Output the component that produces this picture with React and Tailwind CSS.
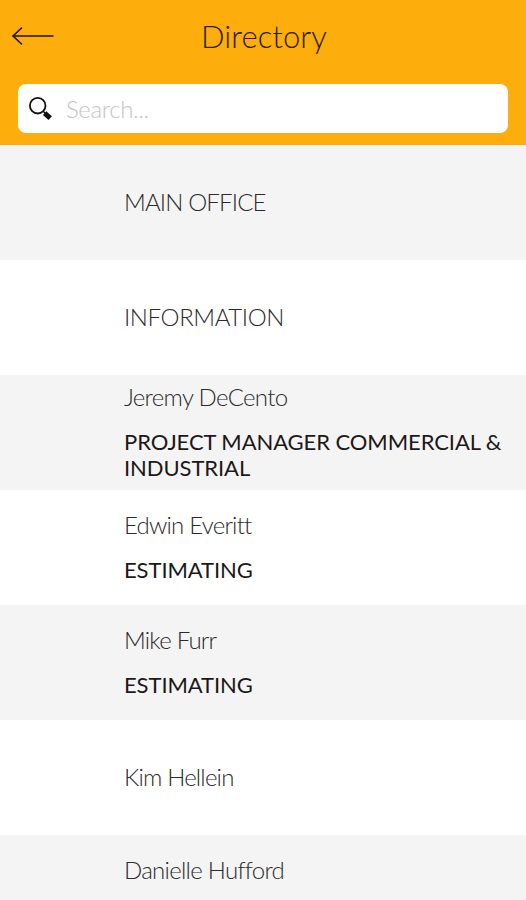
const entries = [
  { name: "MAIN OFFICE", spacing: "tracking-[-0.84px]" },
  { name: "INFORMATION", spacing: "tracking-[-0.4px]" },
  {
    name: "Jeremy DeCento",
    spacing: "tracking-[-0.68px]",
    title: "PROJECT MANAGER COMMERCIAL & INDUSTRIAL",
  },
  { name: "Edwin Everitt", spacing: "tracking-[-0.78px]", title: "ESTIMATING" },
  { name: "Mike Furr", spacing: "tracking-[-0.8px]", title: "ESTIMATING" },
  { name: "Kim Hellein", spacing: "tracking-[-0.8px]" },
  { name: "Danielle Hufford", spacing: "tracking-[-0.72px]", partial: true },
];

function Header() {
  return (
    <header className="h-[145px] shrink-0 bg-[#fdad0c] px-[18px]">
      <div className="grid h-[84px] grid-cols-[60px_1fr_58px] items-center pb-[13px]">
        <button type="button" aria-label="Back" className="-ml-[6px] w-[42px]">
          <svg
            className="mt-px block h-5 w-[42px]"
            viewBox="0 0 42 20"
            fill="none"
            stroke="#1c1305"
            strokeWidth="1.6"
            strokeLinecap="round"
            strokeLinejoin="round"
          >
            <path d="M1.2 10H41" />
            <path d="M9.5 2L1 10l8.500 8" />
          </svg>
        </button>
        <h1 className="text-center text-[31px] font-light leading-[36px] tracking-[0.05px] text-[#2a1c05]">
          Directory
        </h1>
      </div>
      <label className="flex h-[49px] items-center rounded-[8px] bg-white pl-[10px]">
        <svg className="mr-3 block size-[26px]" viewBox="0 0 26 26" fill="none" stroke="#111">
          <circle cx="9.700" cy="9.700" r="7.800" strokeWidth="1.800" />
          <path d="M15.200 15.200l2.500 2.500" strokeWidth="1.600" />
          <path d="M16.600 17.200l5.600 5" strokeWidth="5" />
        </svg>
        <input
          type="text"
          placeholder="Search..."
          className="w-[300px] bg-transparent text-[24px] font-light leading-[30px] tracking-[-0.35px] outline-none placeholder:text-[#c4c4c4]"
        />
      </label>
    </header>
  );
}

function Entry({ name, spacing, title, partial }) {
  return (
    <li
      className={`flex h-[115px] shrink-0 flex-col gap-[19px] pl-[124px] pr-3 odd:bg-[#f4f4f4] even:bg-white ${
        partial ? "justify-start pt-[22px]" : "justify-center"
      } ${title ? "" : "pb-[2px]"}`}
    >
      <p className={`whitespace-nowrap text-[24px] font-light leading-[26px] text-[#2b2b2b] ${spacing}`}>
        {name}
      </p>
      {title && (
        <p className="text-[22px] font-normal leading-[26px] tracking-[-0.08px] text-[#1c1818]">
          {title}
        </p>
      )}
    </li>
  );
}

export default function App() {
  return (
    <div className="flex h-[900px] w-[526px] flex-col overflow-hidden bg-white font-['Lato',sans-serif]">
      <Header />
      <ul className="flex flex-col">
        {entries.map((entry) => (
          <Entry key={entry.name} {...entry} />
        ))}
      </ul>
    </div>
  );
}
